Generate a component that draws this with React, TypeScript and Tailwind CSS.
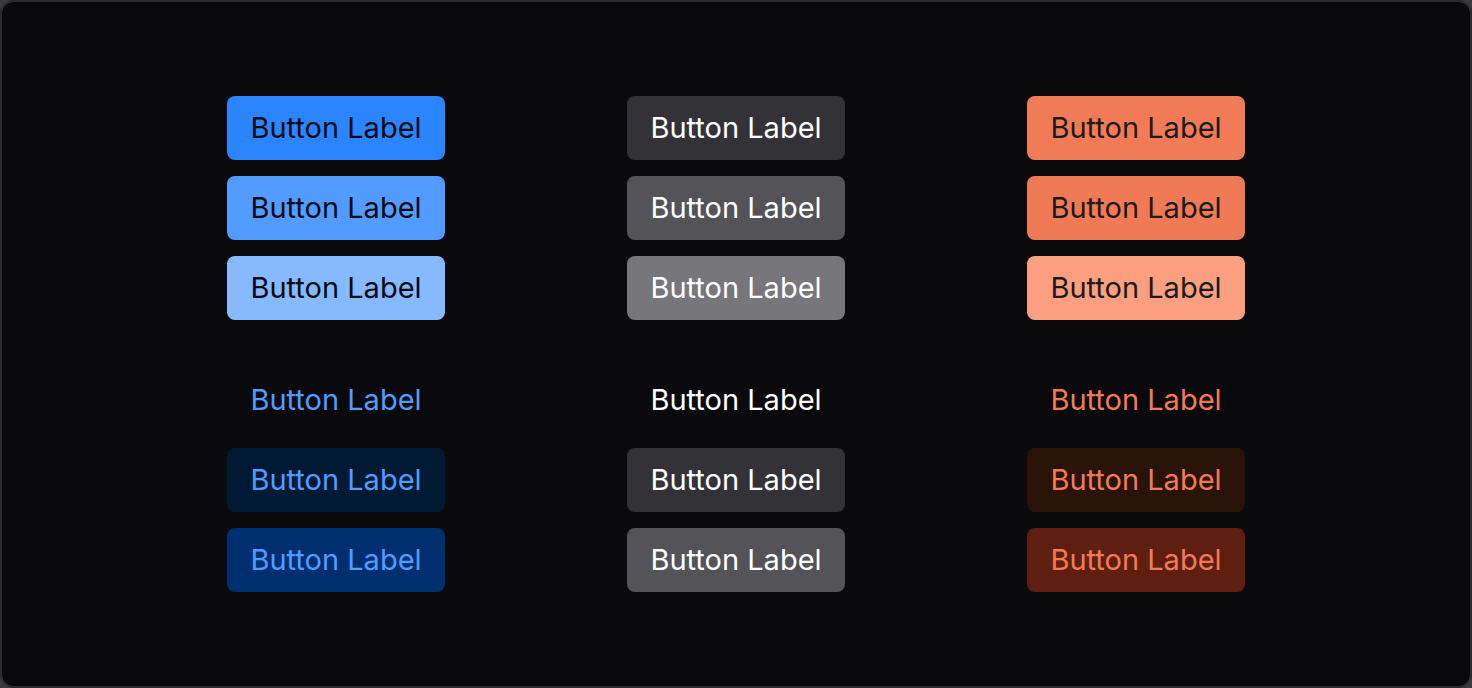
import React from "react";

type Variant = { bg: string; text: string };

const columns: Variant[][] = [
  [
    { bg: "bg-[#2a85ff]", text: "text-[#050a14]" },
    { bg: "bg-[#539cff]", text: "text-[#050a14]" },
    { bg: "bg-[#86b9ff]", text: "text-[#050a14]" },
    { bg: "bg-transparent", text: "text-[#539cff]" },
    { bg: "bg-[#001a33]", text: "text-[#539cff]" },
    { bg: "bg-[#002f70]", text: "text-[#539cff]" },
  ],
  [
    { bg: "bg-[#333337]", text: "text-white" },
    { bg: "bg-[#545458]", text: "text-white" },
    { bg: "bg-[#76767b]", text: "text-white" },
    { bg: "bg-transparent", text: "text-white" },
    { bg: "bg-[#333337]", text: "text-white" },
    { bg: "bg-[#545458]", text: "text-white" },
  ],
  [
    { bg: "bg-[#f27b57]", text: "text-[#1c1a1a]" },
    { bg: "bg-[#f07a55]", text: "text-[#1c1a1a]" },
    { bg: "bg-[#fb9f80]", text: "text-[#1c1a1a]" },
    { bg: "bg-transparent", text: "text-[#f27b57]" },
    { bg: "bg-[#2a1309]", text: "text-[#f27b57]" },
    { bg: "bg-[#5e1f10]", text: "text-[#f27b57]" },
  ],
];

function Btn({ v }: { v: Variant }) {
  return (
    <button
      className={`flex h-16 w-[218px] items-center justify-center rounded-lg pb-[2px] ${v.bg} ${v.text} text-[29px] leading-none`}
      style={{ fontFamily: "Inter, 'Noto Sans', sans-serif" }}
    >
      Button Label
    </button>
  );
}

export default function App() {
  return (
    <div className="h-[688px] w-[1472px] bg-[#3a3a3c]">
      <div className="flex h-full w-full items-center justify-center rounded-[14px] border-2 border-[#2c2c2e] bg-[#0a0a0c]">
        <div className="flex gap-[182px]">
          {columns.map((col, i) => (
            <div key={i} className="flex flex-col">
              <div className="flex flex-col gap-4">
                {col.slice(0, 3).map((v, j) => (
                  <Btn key={j} v={v} />
                ))}
              </div>
              <div className="mt-12 flex flex-col gap-4">
                {col.slice(3).map((v, j) => (
                  <Btn key={j} v={v} />
                ))}
              </div>
            </div>
          ))}
        </div>
      </div>
    </div>
  );
}
